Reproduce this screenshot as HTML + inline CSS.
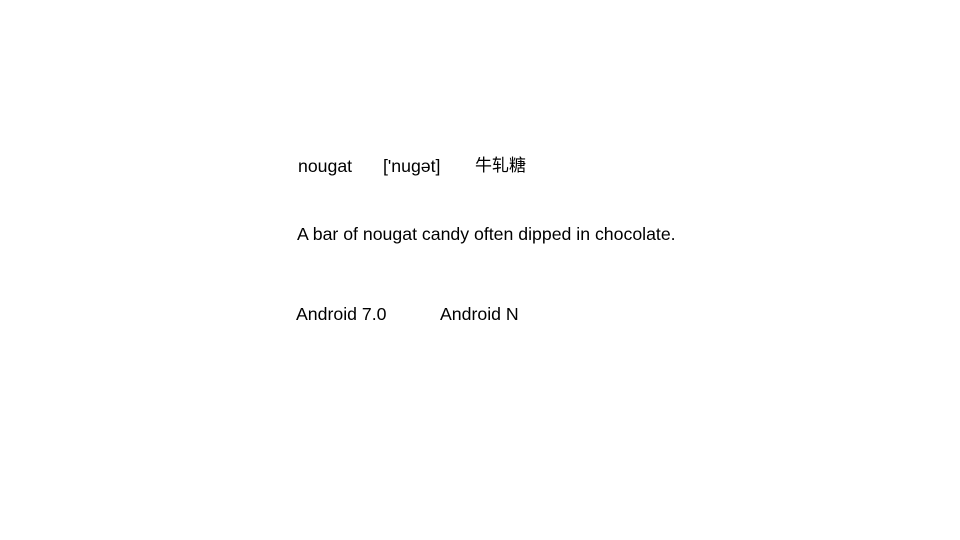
<!DOCTYPE html>
<html><head><meta charset="utf-8"><style>
html,body{margin:0;padding:0;background:#fff;width:960px;height:540px;overflow:hidden}
body{font-family:"Liberation Sans","Noto Sans CJK SC",sans-serif;font-size:17.7px;color:#000}
span{position:absolute;white-space:nowrap;line-height:1}
</style></head><body>
<span style="left:298px;top:158px">nougat</span>
<span style="left:383px;top:158px">['nugət]</span>
<span style="left:475px;top:157px;font-size:17px">牛轧糖</span>
<span style="left:297px;top:226px">A bar of nougat candy often dipped in chocolate.</span>
<span style="left:296px;top:306px">Android 7.0</span>
<span style="left:440px;top:306px">Android N</span>
</body></html>
